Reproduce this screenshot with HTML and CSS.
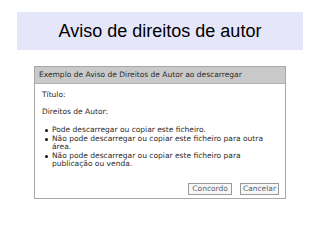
FILE: index.html
```html
<!DOCTYPE html>
<html lang="pt">
<head>
<meta charset="utf-8">
<title>Aviso de direitos de autor</title>
<link rel="stylesheet" href="styles.css">
</head>
<body>
  <h1 class="banner">Aviso de direitos de autor</h1>
  <div class="dialog">
    <div class="dialog-header">Exemplo de Aviso de Direitos de Autor ao descarregar</div>
    <div class="dialog-body">
      <p class="field">Título:</p>
      <p class="field field-gap">Direitos de Autor:</p>
      <ul class="rules">
        <li>Pode descarregar ou copiar este ficheiro.</li>
        <li>Não pode descarregar ou copiar este ficheiro para outra área.</li>
        <li>Não pode descarregar ou copiar este ficheiro para publicação ou venda.</li>
      </ul>
      <div class="actions">
        <button class="btn btn-wide">Concordo</button>
        <button class="btn">Cancelar</button>
      </div>
    </div>
  </div>
</body>
</html>
```

FILE: styles.css
```css
html, body {
  margin: 0;
  padding: 0;
  background: #ffffff;
}

body {
  width: 320px;
  height: 240px;
  overflow: hidden;
}

.banner {
  margin: 12px 17px 0 17px;
  height: 38px;
  line-height: 38px;
  background: #e6e6fa;
  font-family: "Liberation Sans", Arial, sans-serif;
  font-weight: normal;
  font-size: 18px;
  color: #000;
  text-align: center;
}

.dialog {
  margin: 16px 0 0 34px;
  width: 250px;
  border: 1px solid #a8a8a8;
  background: #fff;
  font-family: "DejaVu Sans", Verdana, sans-serif;
  font-size: 7.5px;
  color: #2a2a2a;
}

.dialog-header {
  height: 16px;
  line-height: 16px;
  padding-left: 4px;
  background: #c9c9c9;
  border-bottom: 1px solid #b0b0b0;
  color: #2a2a2a;
}

.dialog-body {
  padding: 6px 6px 3px 7px;
}

.field {
  margin: 0;
  line-height: 9px;
}

.field-gap {
  margin-top: 8px;
}

.rules {
  list-style: none;
  margin: 10px 0 0 0;
  padding: 0;
  line-height: 8.5px;
}

.rules li {
  display: flex;
  align-items: flex-start;
}

.rules li::before {
  content: "";
  flex: none;
  width: 3px;
  height: 3px;
  margin: 3px 4px 0 3px;
  border-radius: 50%;
  background: #111;
}

.actions {
  display: flex;
  justify-content: flex-end;
  gap: 8px;
  margin-top: 14px;
}

.btn {
  height: 12px;
  padding: 0 2px;
  margin: 0;
  border: 1px solid #9a9a9a;
  background: #f7f7f7;
  font-family: "DejaVu Sans", Verdana, sans-serif;
  font-size: 7.5px;
  line-height: 10px;
  color: #5b6170;
}

.btn-wide {
  padding: 0 3px;
}
```
